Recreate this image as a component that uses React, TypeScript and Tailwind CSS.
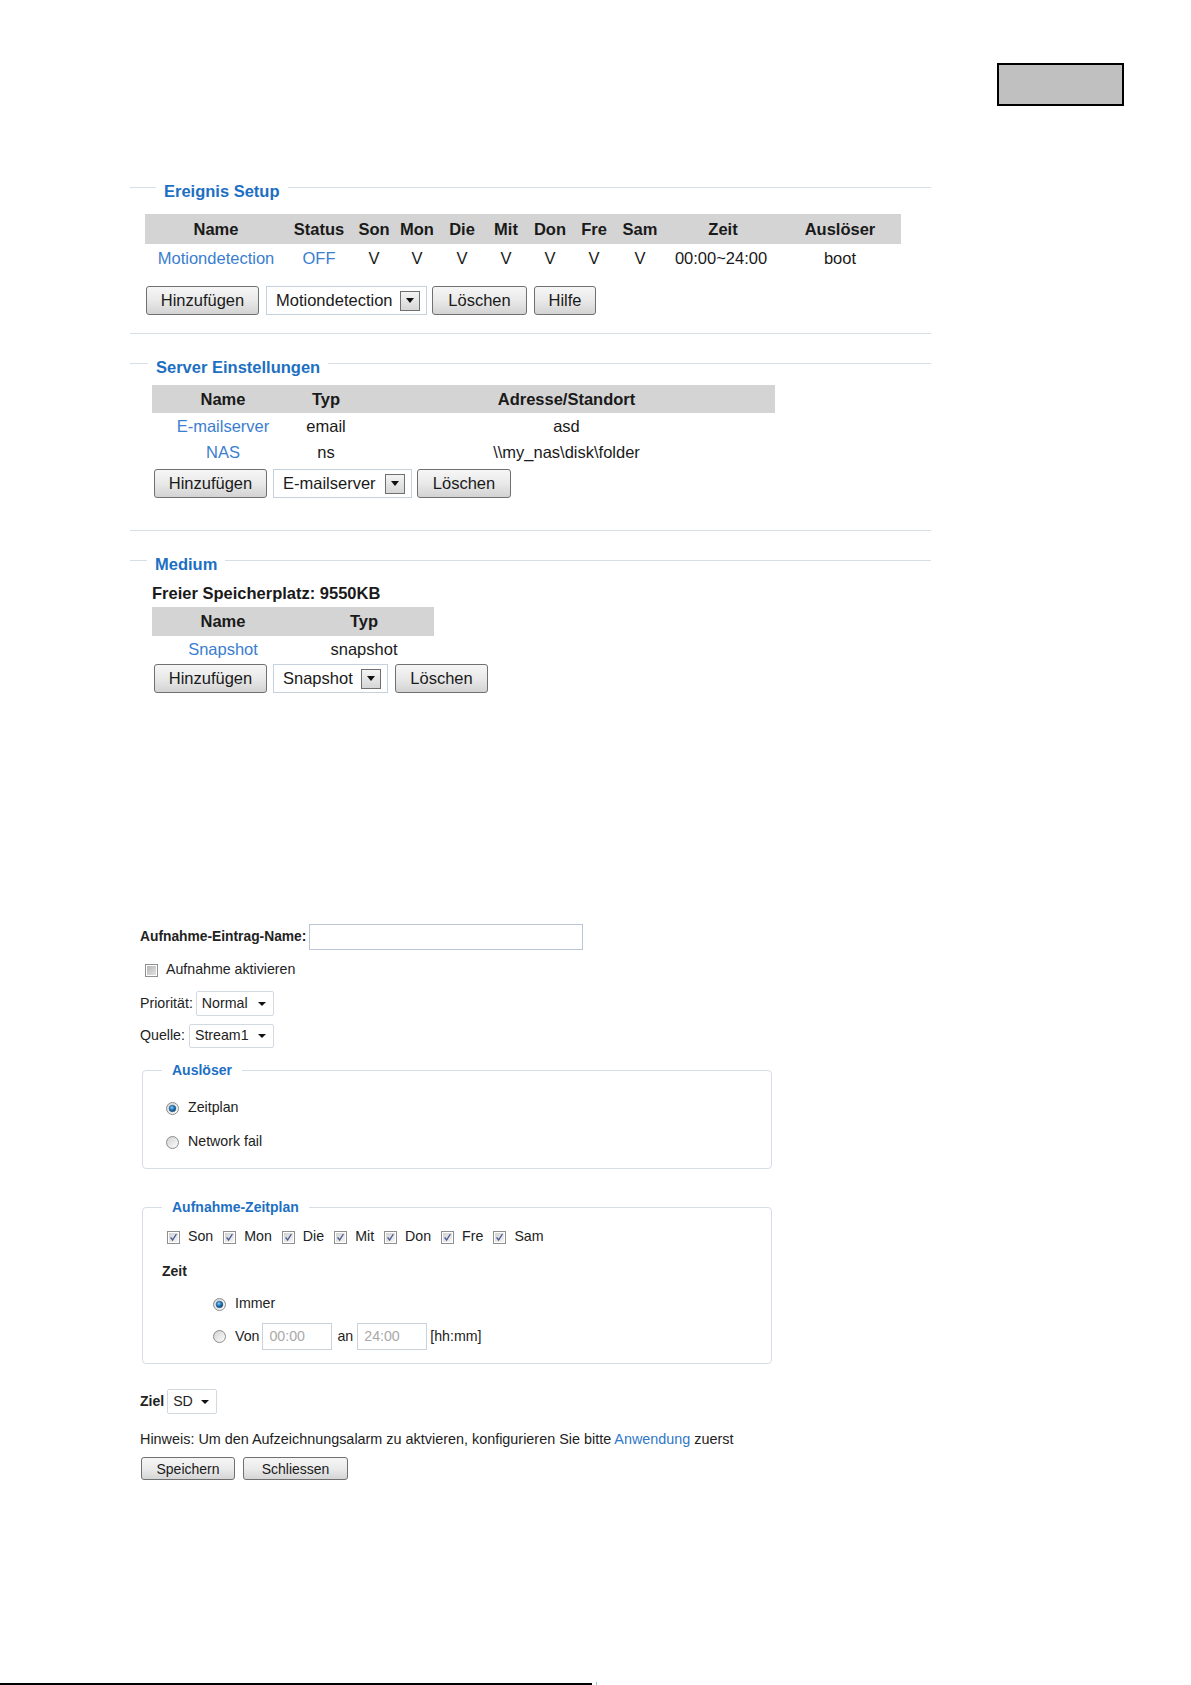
const LEGEND_BLUE = "text-[#1d6fc3]";

function SectionHead({ title, stub }: { title: string; stub: string }) {
  return (
    <div className="flex h-[27px] items-center">
      <div className={`${stub} h-px bg-[#d6dee8]`} />
      <div className={`px-[8px] pt-[8px] text-[16.5px] leading-[19px] font-bold ${LEGEND_BLUE}`}>{title}</div>
      <div className="h-px flex-1 bg-[#d6dee8]" />
    </div>
  );
}

function Btn({ label, w }: { label: string; w: string }) {
  return (
    <button className={`${w} h-[29px] rounded-[3px] border border-[#707070] bg-linear-to-b from-[#f6f6f6] via-[#e9e9e9] to-[#d3d3d3] text-[16.5px] leading-none text-[#1a1a1a]`}>
      {label}
    </button>
  );
}

function Drop({ label, w }: { label: string; w: string }) {
  return (
    <div className={`${w} flex h-[29px] items-center justify-between border border-[#c6d1de] bg-white pl-[9px] pr-[6px]`}>
      <span className="text-[16.5px] leading-none text-[#1a1a1a]">{label}</span>
      <span className="flex h-[20px] w-[20px] items-center justify-center border border-[#6f6f6f] bg-linear-to-b from-[#f4f4f4] to-[#d6d6d6]">
        <svg width="8" height="5" viewBox="0 0 8 5">
          <path d="M0 0h8L4 5z" fill="#111" />
        </svg>
      </span>
    </div>
  );
}

function SmallDrop({ label, w }: { label: string; w: string }) {
  return (
    <div className={`${w} flex h-full items-center justify-between rounded-[2px] border border-[#d3d9e1] bg-white pl-[5px] pr-[7px]`}>
      <span>{label}</span>
      <svg width="8" height="4" viewBox="0 0 8 4">
        <path d="M0 0h8L4 4z" fill="#111" />
      </svg>
    </div>
  );
}

function SmallBtn({ label, w }: { label: string; w: string }) {
  return (
    <button className={`${w} h-[23px] rounded-[3px] border border-[#707070] bg-linear-to-b from-[#f5f5f5] via-[#ebebeb] to-[#d5d5d5] text-[14px] leading-none text-[#1a1a1a]`}>
      {label}
    </button>
  );
}

function Radio({ on }: { on?: boolean }) {
  return (
    <svg width="13" height="13" viewBox="0 0 13 13" className="shrink-0">
      <defs>
        <linearGradient id="radioFill" x1="0" y1="0" x2="1" y2="1">
          <stop offset="0" stopColor="#d0d0d0" />
          <stop offset="1" stopColor="#ffffff" />
        </linearGradient>
        <radialGradient id="radioDot" cx="0.4" cy="0.35" r="0.7">
          <stop offset="0" stopColor="#8fd0f5" />
          <stop offset="0.5" stopColor="#1d78c0" />
          <stop offset="1" stopColor="#0a3f6e" />
        </radialGradient>
      </defs>
      <circle cx="6.5" cy="6.5" r="6" fill="url(#radioFill)" stroke="#8c8c8c" />
      {on && <circle cx="6.5" cy="6.5" r="3.3" fill="url(#radioDot)" stroke="#24507a" strokeWidth="0.6" />}
    </svg>
  );
}

function Check({ on }: { on?: boolean }) {
  return (
    <svg width="13" height="13" viewBox="0 0 13 13" className="shrink-0">
      <defs>
        <linearGradient id="cbOn" x1="0" y1="0" x2="1" y2="1">
          <stop offset="0" stopColor="#d2d2d2" />
          <stop offset="1" stopColor="#f5f5f5" />
        </linearGradient>
        <linearGradient id="cbOff" x1="0" y1="0" x2="1" y2="1">
          <stop offset="0" stopColor="#b5b5b5" />
          <stop offset="1" stopColor="#e2e2e2" />
        </linearGradient>
      </defs>
      <rect x="0.5" y="0.5" width="12" height="12" fill="#fff" stroke="#8e8f8f" />
      <rect x="2" y="2" width="9" height="9" fill={on ? "url(#cbOn)" : "url(#cbOff)"} />
      {on && <path d="M3.6 6.4l2 2.6 3.8-6" fill="none" stroke="#4a5e96" strokeWidth="1.4" />}
    </svg>
  );
}

const DAYS = ["Son", "Mon", "Die", "Mit", "Don", "Fre", "Sam"];

export default function App() {
  return (
    <div className="flex h-[1685px] w-[1191px] flex-col bg-white font-['Liberation_Sans',Arial,sans-serif] text-[#1a1a1a]">
      <div className="flex justify-end pr-[67px] pt-[63px]">
        <div className="h-[43px] w-[127px] border-2 border-black bg-[#c0c0c0]" />
      </div>

      {/* Ereignis Setup */}
      <section className="ml-[130px] mt-[68px] w-[801px] border-b border-[#d6dee8] pb-[18px]">
        <SectionHead title="Ereignis Setup" stub="w-[26px]" />
        <div className="ml-[15px] mt-[13px] w-[756px] text-[16.5px]">
          <div className="grid h-[30px] grid-cols-[142px_64px_46px_40px_50px_38px_50px_38px_54px_112px_122px] items-center bg-[#d4d4d4] text-center font-bold">
            <span>Name</span>
            <span>Status</span>
            {DAYS.map((d) => (
              <span key={d}>{d}</span>
            ))}
            <span>Zeit</span>
            <span>Auslöser</span>
          </div>
          <div className="grid h-[28px] grid-cols-[142px_64px_46px_40px_50px_38px_50px_38px_54px_112px_122px] items-center text-center">
            <span className="text-[#3a7ecf]">Motiondetection</span>
            <span className="text-[#3a7ecf]">OFF</span>
            {DAYS.map((d) => (
              <span key={d}>V</span>
            ))}
            <span className="pr-[4px]">00:00~24:00</span>
            <span>boot</span>
          </div>
        </div>
        <div className="ml-[16px] mt-[14px] flex">
          <Btn label="Hinzufügen" w="w-[113px]" />
          <div className="ml-[7px]">
            <Drop label="Motiondetection" w="w-[161px]" />
          </div>
          <div className="ml-[5px]">
            <Btn label="Löschen" w="w-[95px]" />
          </div>
          <div className="ml-[7px]">
            <Btn label="Hilfe" w="w-[62px]" />
          </div>
        </div>
      </section>

      {/* Server Einstellungen */}
      <section className="ml-[130px] mt-[16px] w-[801px] border-b border-[#d6dee8] pb-[32px]">
        <SectionHead title="Server Einstellungen" stub="w-[18px]" />
        <div className="ml-[22px] mt-[8px] w-[623px] text-[16.5px]">
          <div className="grid h-[28px] grid-cols-[142px_64px_1fr] items-center bg-[#d4d4d4] text-center font-bold">
            <span>Name</span>
            <span>Typ</span>
            <span>Adresse/Standort</span>
          </div>
          <div className="grid h-[26px] grid-cols-[142px_64px_1fr] items-center text-center">
            <span className="text-[#3a7ecf]">E-mailserver</span>
            <span>email</span>
            <span>asd</span>
          </div>
          <div className="grid h-[26px] grid-cols-[142px_64px_1fr] items-center text-center">
            <span className="text-[#3a7ecf]">NAS</span>
            <span>ns</span>
            <span>\\my_nas\disk\folder</span>
          </div>
        </div>
        <div className="ml-[24px] mt-[4px] flex">
          <Btn label="Hinzufügen" w="w-[113px]" />
          <div className="ml-[6px]">
            <Drop label="E-mailserver" w="w-[139px]" />
          </div>
          <div className="ml-[5px]">
            <Btn label="Löschen" w="w-[94px]" />
          </div>
        </div>
      </section>

      {/* Medium */}
      <section className="ml-[130px] mt-[16px] w-[801px]">
        <SectionHead title="Medium" stub="w-[17px]" />
        <div className="ml-[22px] mt-[10px] text-[16.5px] leading-[19px] font-bold">Freier Speicherplatz: 9550KB</div>
        <div className="ml-[22px] mt-[4px] w-[282px] text-[16.5px]">
          <div className="grid h-[29px] grid-cols-[142px_140px] items-center bg-[#d4d4d4] text-center font-bold">
            <span>Name</span>
            <span>Typ</span>
          </div>
          <div className="grid h-[27px] grid-cols-[142px_140px] items-center text-center">
            <span className="text-[#3a7ecf]">Snapshot</span>
            <span>snapshot</span>
          </div>
        </div>
        <div className="ml-[24px] mt-[1px] flex">
          <Btn label="Hinzufügen" w="w-[113px]" />
          <div className="ml-[6px]">
            <Drop label="Snapshot" w="w-[115px]" />
          </div>
          <div className="ml-[7px]">
            <Btn label="Löschen" w="w-[93px]" />
          </div>
        </div>
      </section>

      {/* Aufnahme form */}
      <div className="ml-[140px] mt-[231px] w-[640px] text-[14.2px] text-[#222]">
        <div className="flex h-[26px] items-center">
          <span className="text-[13.8px] font-bold">Aufnahme-Eintrag-Name:</span>
          <div className="ml-[3px] h-[26px] w-[274px] border border-[#b9c6d6] bg-white" />
        </div>
        <div className="mt-[10px] flex h-[20px] items-center">
          <div className="ml-[5px]">
            <Check />
          </div>
          <span className="ml-[8px]">Aufnahme aktivieren</span>
        </div>
        <div className="mt-[11px] flex h-[25px] items-center">
          <span>Priorität:</span>
          <div className="ml-[3px] h-[25px]">
            <SmallDrop label="Normal" w="w-[78px]" />
          </div>
        </div>
        <div className="mt-[8px] flex h-[24px] items-center">
          <span>Quelle:</span>
          <div className="ml-[4px] h-[24px]">
            <SmallDrop label="Stream1" w="w-[85px]" />
          </div>
        </div>

        <fieldset className="ml-[2px] mt-[14px] w-[630px] rounded-[4px] border border-[#d6dde5] pb-[16px] pl-[19px]">
          <legend className={`px-[10px] text-[14px] leading-[16px] font-bold ${LEGEND_BLUE}`}>Auslöser</legend>
          <div className="ml-[4px] mt-[20px] flex h-[20px] items-center">
            <Radio on />
            <span className="ml-[9px]">Zeitplan</span>
          </div>
          <div className="ml-[4px] mt-[14px] flex h-[20px] items-center">
            <Radio />
            <span className="ml-[9px]">Network fail</span>
          </div>
        </fieldset>

        <fieldset className="ml-[2px] mt-[30px] w-[630px] rounded-[4px] border border-[#d6dde5] pb-[13px] pl-[19px]">
          <legend className={`px-[10px] text-[14px] leading-[16px] font-bold ${LEGEND_BLUE}`}>Aufnahme-Zeitplan</legend>
          <div className="ml-[5px] mt-[12px] flex h-[20px] items-center">
            {DAYS.map((d) => (
              <div key={d} className="mr-[10px] flex items-center">
                <Check on />
                <span className="ml-[8px]">{d}</span>
              </div>
            ))}
          </div>
          <div className="mt-[14px] flex h-[20px] items-center text-[14px] font-bold">Zeit</div>
          <div className="ml-[51px] mt-[13px] flex h-[20px] items-center">
            <Radio on />
            <span className="ml-[9px]">Immer</span>
          </div>
          <div className="ml-[51px] mt-[9px] flex h-[27px] items-center">
            <Radio />
            <span className="ml-[9px]">Von</span>
            <div className="ml-[3px] flex h-[27px] w-[70px] items-center border border-[#c9d1db] pl-[6px] text-[#a9a9a9]">00:00</div>
            <span className="ml-[5px]">an</span>
            <div className="ml-[4px] flex h-[27px] w-[70px] items-center border border-[#c9d1db] pl-[6px] text-[#a9a9a9]">24:00</div>
            <span className="ml-[3px]">[hh:mm]</span>
          </div>
        </fieldset>

        <div className="mt-[25px] flex h-[25px] items-center">
          <span className="text-[14px] font-bold">Ziel</span>
          <div className="ml-[3px] h-[25px]">
            <SmallDrop label="SD" w="w-[50px]" />
          </div>
        </div>
        <div className="mt-[16px] h-[18px] text-[14.4px] leading-[18px] whitespace-nowrap">
          Hinweis: Um den Aufzeichnungsalarm zu aktvieren, konfigurieren Sie bitte{" "}
          <span className="text-[#2f78c8]">Anwendung</span> zuerst
        </div>
        <div className="ml-[1px] mt-[9px] flex">
          <SmallBtn label="Speichern" w="w-[94px]" />
          <div className="ml-[8px]">
            <SmallBtn label="Schliessen" w="w-[105px]" />
          </div>
        </div>
      </div>

      <div className="mt-auto flex items-end">
        <div className="h-[2px] w-[592px] bg-black" />
        <div className="ml-[4px] h-[3px] w-px bg-[#7fd0d8]" />
      </div>
    </div>
  );
}
